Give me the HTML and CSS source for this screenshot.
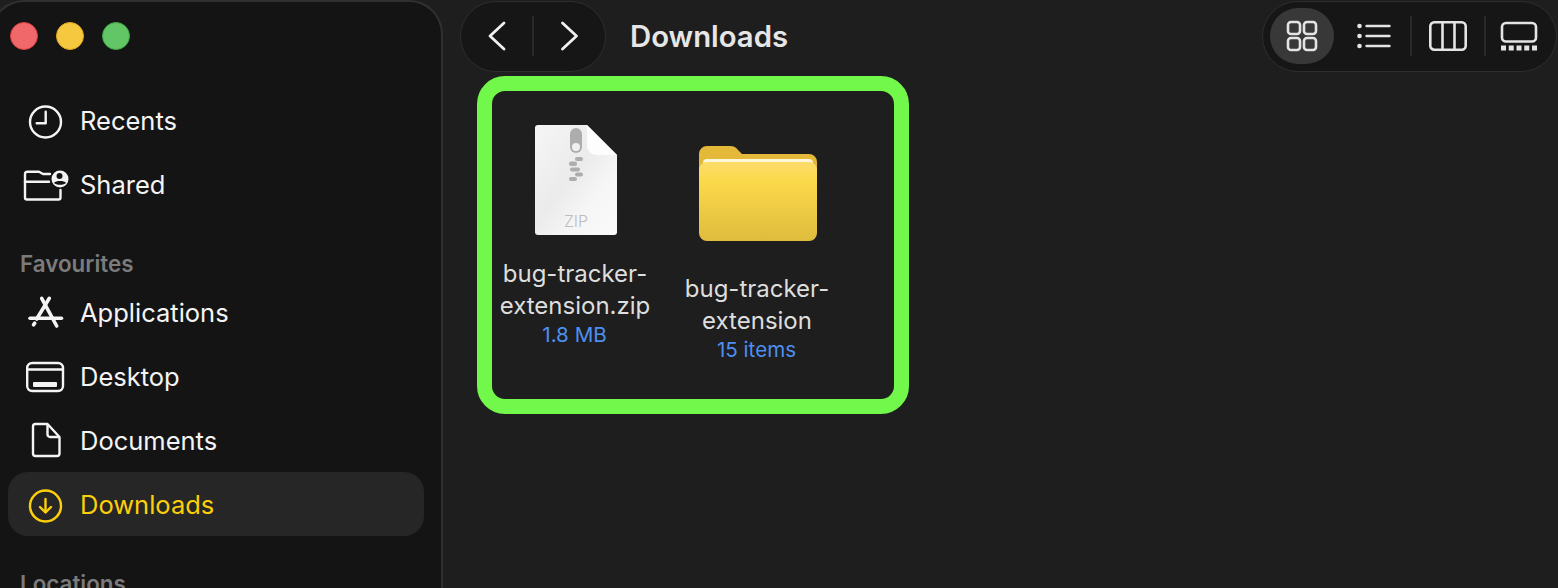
FILE: index.html
```html
<!DOCTYPE html>
<html lang="en">

<head>
    <meta charset="UTF-8">
    <title>Downloads</title>
    <link rel="stylesheet" href="styles.css">
</head>

<body>
    <div class="window">
        <aside class="sidebar">
            <div class="lights">
                <span class="light red"></span>
                <span class="light yellow"></span>
                <span class="light green"></span>
            </div>

            <div class="side-row first">
                <svg class="side-icon" viewBox="0 0 48 48" fill="none" stroke="currentColor" stroke-width="2.4" stroke-linecap="round" stroke-linejoin="round">
                    <circle cx="23.500" cy="26" r="15.500"/>
                    <path d="M23.700 15.700V27.300H14.700"/>
                </svg>
                <span>Recents</span>
            </div>
            <div class="side-row">
                <svg class="side-icon" viewBox="0 0 48 48" fill="none" stroke="currentColor" stroke-width="2.4" stroke-linecap="round" stroke-linejoin="round">
                    <path d="M28 14H21L17 11.800H5.500A2.500 2.500 0 0 0 3 14.300V37.500A2 2 0 0 0 5 39.500H36.500A2 2 0 0 0 38.500 37.500V30"/>
                    <path d="M3 21.700H27"/>
                    <circle cx="38" cy="19" r="8.500" fill="currentColor" stroke="none"/>
                    <circle cx="37.500" cy="16" r="3" fill="#141414" stroke="none"/>
                    <path d="M32 22.700C34 20.300 42 20.300 44 22.700C42 25.500 34 25.500 32 22.700Z" fill="#141414" stroke="none"/>
                </svg>
                <span>Shared</span>
            </div>

            <div class="side-title favourites">Favourites</div>

            <div class="side-row">
                <svg class="side-icon" viewBox="0 0 48 48" fill="none" stroke="currentColor" stroke-width="3.600" stroke-linecap="round" stroke-linejoin="round">
                    <path d="M19.700 10.300L34.700 38"/>
                    <path d="M27.300 10.300L14.700 31"/>
                    <path d="M8 30.300H39.500"/>
                    <path d="M12.700 35.200L11.500 36.800"/>
                </svg>
                <span>Applications</span>
            </div>
            <div class="side-row">
                <svg class="side-icon" viewBox="0 0 48 48" fill="none" stroke="currentColor" stroke-width="2.4" stroke-linejoin="round">
                    <rect x="5.200" y="11" width="35.800" height="28" rx="5"/>
                    <path d="M5.200 17.500H41"/>
                    <rect x="11" y="30" width="24" height="5" rx="1" fill="currentColor" stroke="none"/>
                </svg>
                <span>Desktop</span>
            </div>
            <div class="side-row">
                <svg class="side-icon" viewBox="0 0 48 48" fill="none" stroke="currentColor" stroke-width="2.4" stroke-linejoin="round">
                    <path d="M11 10.500A2.500 2.500 0 0 1 13.500 8H25.500L37.500 21V37.500A2.500 2.500 0 0 1 35 40H13.500A2.500 2.500 0 0 1 11 37.500Z"/>
                    <path d="M25.500 8V18.500A2.500 2.500 0 0 0 28 21H37.500"/>
                </svg>
                <span>Documents</span>
            </div>
            <div class="side-row active">
                <svg class="side-icon" viewBox="0 0 48 48" fill="none" stroke="currentColor" stroke-width="2.4" stroke-linecap="round" stroke-linejoin="round">
                    <circle cx="23.500" cy="26" r="15.500"/>
                    <path d="M23.500 19V32"/>
                    <path d="M18 27L23.500 32.500L29 27"/>
                </svg>
                <span>Downloads</span>
            </div>

            <div class="side-title locations">Locations</div>
        </aside>

        <main class="main">
            <div class="toolbar">
                <div class="nav-pill">
                    <div class="nav-btn">
                        <svg width="24" height="32" viewBox="0 0 24 32" fill="none" stroke="currentColor" stroke-width="2.800" stroke-linecap="round" stroke-linejoin="round">
                            <path d="M19 3L5 16L19 29"/>
                        </svg>
                    </div>
                    <span class="divider"></span>
                    <div class="nav-btn">
                        <svg width="24" height="32" viewBox="0 0 24 32" fill="none" stroke="currentColor" stroke-width="2.800" stroke-linecap="round" stroke-linejoin="round">
                            <path d="M4.500 3L18.500 16L4.500 29"/>
                        </svg>
                    </div>
                </div>
                <h1 class="title">Downloads</h1>

                <div class="view-pill">
                    <div class="view-btn selected">
                        <svg width="32" height="32" viewBox="0 0 32 32" fill="none" stroke="currentColor" stroke-width="2.600">
                            <rect x="2" y="2" width="12" height="12" rx="3"/>
                            <rect x="18" y="2" width="12" height="12" rx="3"/>
                            <rect x="2" y="18" width="12" height="12" rx="3"/>
                            <rect x="18" y="18" width="12" height="12" rx="3"/>
                        </svg>
                    </div>
                    <div class="view-btn list-btn">
                        <svg width="36" height="28" viewBox="0 0 36 28" fill="none" stroke="currentColor" stroke-width="2.400" stroke-linecap="round">
                            <circle cx="3.500" cy="4" r="2.300" fill="currentColor" stroke="none"/>
                            <circle cx="3.500" cy="14" r="2.300" fill="currentColor" stroke="none"/>
                            <circle cx="3.500" cy="24" r="2.300" fill="currentColor" stroke="none"/>
                            <path d="M10.500 4H33.500M10.500 14H33.500M10.500 24H33.500"/>
                        </svg>
                    </div>
                    <span class="divider"></span>
                    <div class="view-btn">
                        <svg width="40" height="32" viewBox="0 0 40 32" fill="none" stroke="currentColor" stroke-width="2.600" stroke-linejoin="round">
                            <rect x="2.300" y="2.300" width="35.400" height="27.400" rx="4"/>
                            <path d="M14.500 2.500V29.500M26.500 2.500V29.500"/>
                        </svg>
                    </div>
                    <span class="divider"></span>
                    <div class="view-btn gallery-btn">
                        <svg width="40" height="32" viewBox="0 0 40 32" fill="none" stroke="currentColor" stroke-width="2.600">
                            <rect x="4" y="3" width="34" height="18.500" rx="4"/>
                            <g fill="currentColor" stroke="none">
                                <rect x="3" y="25.500" width="5" height="5"/>
                                <rect x="10.750" y="25.500" width="5" height="5"/>
                                <rect x="18.500" y="25.500" width="5" height="5"/>
                                <rect x="26.250" y="25.500" width="5" height="5"/>
                                <rect x="34" y="25.500" width="5" height="5"/>
                            </g>
                        </svg>
                    </div>
                </div>
            </div>

            <div class="highlight">
                <div class="item file-item">
                    <svg class="file-icon" width="82" height="110" viewBox="0 0 82 110">
                        <defs>
                            <linearGradient id="paper" x1="0" y1="0" x2="1" y2="1">
                                <stop offset="0" stop-color="#f6f6f6"/>
                                <stop offset="0.45" stop-color="#ebebeb"/>
                                <stop offset="0.7" stop-color="#f6f6f6"/>
                                <stop offset="1" stop-color="#fafafa"/>
                            </linearGradient>
                        </defs>
                        <path d="M3 0H52L82 30V107A3 3 0 0 1 79 110H3A3 3 0 0 1 0 107V3A3 3 0 0 1 3 0Z" fill="url(#paper)"/>
                        <path d="M52 0L82 30H61A9 9 0 0 1 52 21Z" fill="#fdfdfd"/>
                        <rect x="35" y="3" width="12" height="25" rx="6" fill="#adadad"/>
                        <circle cx="41" cy="22" r="4" fill="#f0f0f0"/>
                        <g fill="#adadad">
                            <rect x="40" y="32" width="8" height="4" rx="2"/>
                            <rect x="34" y="36.500" width="8" height="4.500" rx="2"/>
                            <rect x="35" y="42.500" width="10" height="4" rx="2"/>
                            <rect x="40" y="47.500" width="8" height="4" rx="2"/>
                            <rect x="34" y="52" width="8" height="4" rx="2"/>
                        </g>
                        <text class="zip-text" x="41" y="102" text-anchor="middle">ZIP</text>
                    </svg>
                    <div class="item-name">bug-tracker-<br>extension.zip</div>
                    <div class="item-info">1.8 MB</div>
                </div>
                <div class="item folder-item">
                    <svg class="folder-icon" width="118" height="96" viewBox="0 0 118 96">
                        <defs>
                            <linearGradient id="folder-front" x1="0" y1="0" x2="0" y2="1">
                                <stop offset="0" stop-color="#fbdc6b"/>
                                <stop offset="0.25" stop-color="#fbd94a"/>
                                <stop offset="1" stop-color="#dfbc3d"/>
                            </linearGradient>
                        </defs>
                        <path d="M0 8A8 8 0 0 1 8 0H31C35 0 37 1.500 39 4L43 8H110A8 8 0 0 1 118 16V40H0Z" fill="#e4b93a"/>
                        <rect x="4" y="13" width="110" height="12" rx="4" fill="#fdf6d8"/>
                        <path d="M0 24A8 8 0 0 1 8 16H110A8 8 0 0 1 118 24V87A8 8 0 0 1 110 95H8A8 8 0 0 1 0 87Z" fill="url(#folder-front)"/>
                    </svg>
                    <div class="item-name">bug-tracker-<br>extension</div>
                    <div class="item-info">15 items</div>
                </div>
            </div>
        </main>
    </div>
</body>

</html>
```

FILE: styles.css
```css
* {
    box-sizing: border-box;
}

html,
body {
    margin: 0;
    height: 100%;
    overflow: hidden;
}

body {
    background: #1e1e1e;
    font-family: Inter, "Liberation Sans", sans-serif;
}

.window {
    display: flex;
    height: 588px;
    overflow: hidden;
}

/* sidebar */
.sidebar {
    flex: none;
    width: 453px;
    height: 640px;
    margin-left: -10px;
    padding: 0 17px 0 16px;
    background: #141414;
    border: 2px solid #303030;
    border-bottom: 0;
    border-radius: 34px 34px 0 0;
}

.lights {
    display: flex;
    gap: 18px;
    height: 34px;
    margin: 20px 0 0 2px;
}

.light {
    width: 28px;
    height: 28px;
    border-radius: 50%;
}

.light.red {
    background: #f0686a;
    border: 1px solid #d9403f;
}

.light.yellow {
    background: #f5c83f;
    border: 1px solid #dca81e;
}

.light.green {
    background: #62c566;
    border: 1px solid #3ea744;
}

.side-row {
    display: flex;
    align-items: center;
    height: 64px;
    padding-left: 14px;
    gap: 10px;
    color: #f4f4f4;
    font-size: 25.500px;
    border-radius: 20px;
}

.side-row.first {
    margin-top: 32px;
}

.side-row.active {
    background: #262626;
    color: #fdcf0a;
}

.side-icon {
    flex: none;
    width: 48px;
    height: 48px;
}

.side-title {
    padding-left: 12px;
    color: #7b7b7b;
    font-size: 22.400px;
    font-weight: 600;
    line-height: 26px;
}

.favourites {
    margin-top: 35px;
    margin-bottom: 3px;
}

.locations {
    margin-top: 35px;
}

/* main area */
.main {
    flex: 1;
    padding: 0 1px 0 17px;
}

.toolbar {
    display: flex;
    align-items: center;
    height: 72px;
    margin-bottom: 4px;
}

.nav-pill,
.view-pill {
    display: flex;
    align-items: center;
    height: 71px;
    background: #161616;
    border: 1px solid #2e2e2e;
    border-radius: 36px;
    color: #f0f0f0;
}

.nav-pill {
    width: 146px;
}

.nav-btn {
    flex: 1;
    display: flex;
    justify-content: center;
}

.divider {
    flex: none;
    width: 2px;
    height: 40px;
    background: #2a2a2a;
}

.title {
    flex: 1;
    margin: 0 0 0 24px;
    color: #e6e6e6;
    font-size: 29.300px;
    font-weight: 600;
}

.view-pill {
    gap: 4px;
    padding: 0 10px 0 7px;
    color: #e4e4e4;
}

.view-btn {
    display: flex;
    align-items: center;
    justify-content: center;
    width: 64px;
    height: 56px;
    border-radius: 28px;
}

.view-btn.selected {
    background: #383838;
}

.list-btn {
    margin-left: 4px;
}

.gallery-btn {
    width: 56px;
}

/* green outline around the two items */
.highlight {
    display: flex;
    gap: 16px;
    width: 432px;
    height: 338px;
    margin-left: 17px;
    border: 15px solid #72f84a;
    border-radius: 28px;
}

.item {
    display: flex;
    flex-direction: column;
    align-items: center;
    width: 166px;
    text-align: center;
}

.file-item {
    padding-top: 34px;
}

.folder-item {
    padding-top: 55px;
}

.file-icon {
    margin: 0 0 23px 2px;
}

.folder-icon {
    margin: 0 0 31px 2px;
}

.zip-text {
    fill: #bcbcbc;
    font-family: Inter, "Liberation Sans", sans-serif;
    font-size: 16px;
    font-weight: 300;
}

.item-name {
    color: #dedede;
    font-size: 24px;
    line-height: 32px;
    white-space: nowrap;
}

.item-info {
    margin-left: -1px;
    color: #4d8ff0;
    font-size: 20.600px;
    line-height: 26px;
}
```
